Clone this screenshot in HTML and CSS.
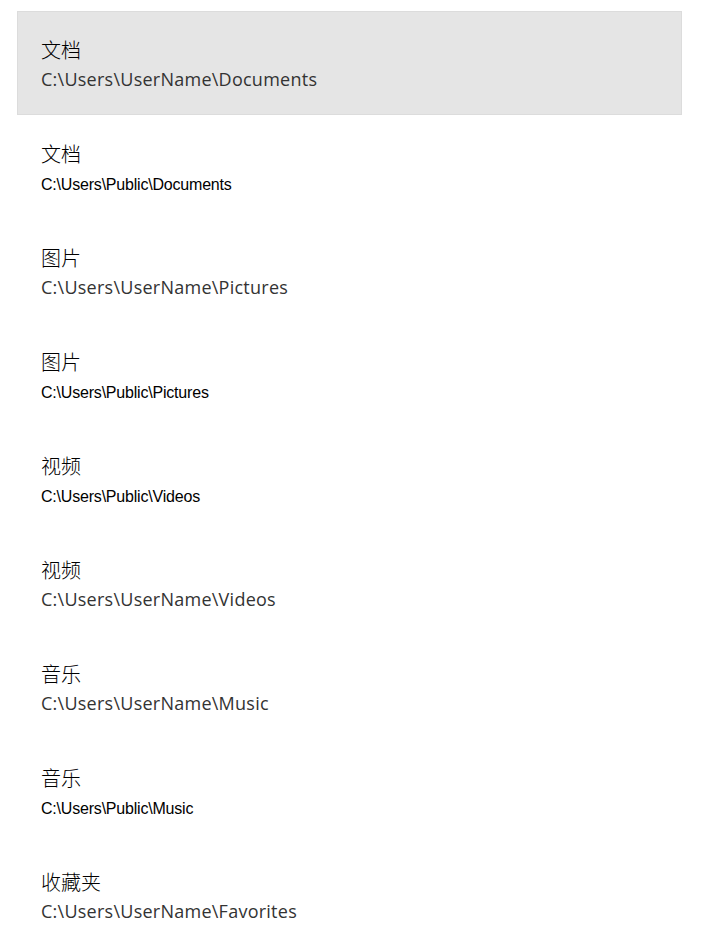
FILE: index.html
```html
<!DOCTYPE html>
<html lang="zh">
<head>
<meta charset="utf-8">
<title>Folders</title>
<link rel="stylesheet" href="styles.css">
</head>
<body>
<ul class="list">
  <li class="item selected"><div class="title">文档</div><div class="path path-user">C:\Users\UserName\Documents</div></li>
  <li class="item"><div class="title">文档</div><div class="path path-public">C:\Users\Public\Documents</div></li>
  <li class="item"><div class="title">图片</div><div class="path path-user">C:\Users\UserName\Pictures</div></li>
  <li class="item"><div class="title">图片</div><div class="path path-public">C:\Users\Public\Pictures</div></li>
  <li class="item"><div class="title">视频</div><div class="path path-public">C:\Users\Public\Videos</div></li>
  <li class="item"><div class="title">视频</div><div class="path path-user">C:\Users\UserName\Videos</div></li>
  <li class="item"><div class="title">音乐</div><div class="path path-user">C:\Users\UserName\Music</div></li>
  <li class="item"><div class="title">音乐</div><div class="path path-public">C:\Users\Public\Music</div></li>
  <li class="item"><div class="title">收藏夹</div><div class="path path-user">C:\Users\UserName\Favorites</div></li>
</ul>
</body>
</html>
```
FILE: styles.css
```css
html, body {
  margin: 0;
  padding: 0;
  background: #ffffff;
}
body {
  padding: 11px 21px 0 17px;
}
.list {
  list-style: none;
  margin: 0;
  padding: 0;
  display: flex;
  flex-direction: column;
}
.item {
  box-sizing: border-box;
  height: 104px;
  padding: 27px 23px 0 23px;
  border: 1px solid transparent;
  display: flex;
  flex-direction: column;
}
.item.selected {
  background: #e5e5e5;
  border-color: #dcdcdc;
}
.title {
  font-family: "Noto Sans CJK SC", "Noto Sans", sans-serif;
  font-size: 20px;
  font-weight: 300;
  line-height: 22px;
  color: #000;
}
.path {
  white-space: nowrap;
}
.path-user {
  margin-top: 6px;
  font-family: "Open Sans", "Noto Sans", sans-serif;
  font-size: 18px;
  line-height: 24px;
  letter-spacing: 0.25px;
  color: #333;
}
.path-public {
  margin-top: 11px;
  font-family: "Liberation Sans", Arial, sans-serif;
  font-size: 16px;
  line-height: 18px;
  letter-spacing: -0.2px;
  color: #000;
}
```
